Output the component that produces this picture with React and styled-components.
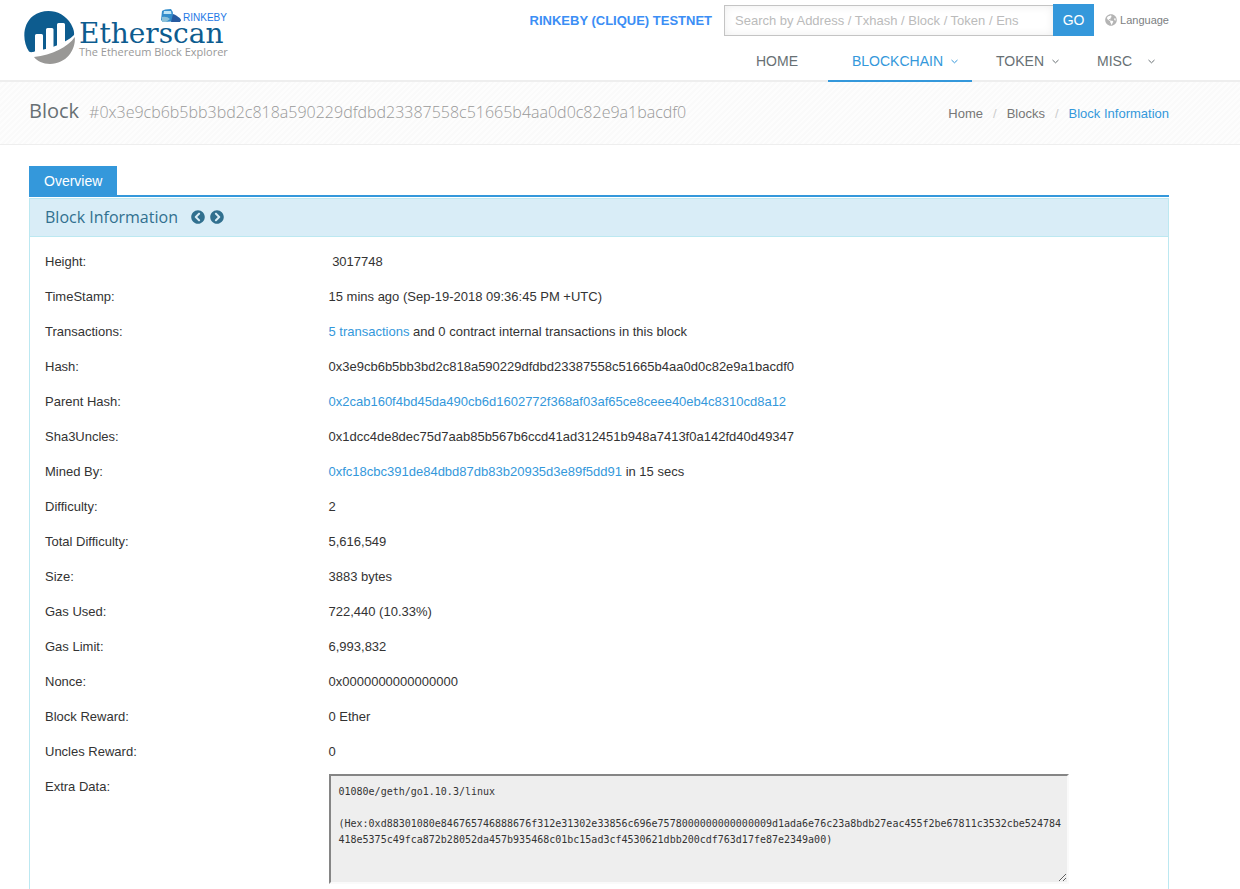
import React from "react";
import styled, { createGlobalStyle } from "styled-components";
import { FaGlobeAmericas, FaChevronCircleLeft, FaChevronCircleRight } from "react-icons/fa";

const Global = createGlobalStyle`
  *, *::before, *::after { box-sizing: border-box; }
  body {
    margin: 0;
    background: #fff;
    color: #333;
    font: 13px/21px "Liberation Sans", Arial, sans-serif;
    overflow-x: hidden;
  }
  a { color: #3498db; text-decoration: none; }
  a:hover { text-decoration: underline; }
`;

const Container = styled.div`
  max-width: 1170px;
  margin: 0 auto;
  padding: 0 15px;
  margin-left: max(14px, calc(50% - 606px));
`;

const Header = styled.header`
  border-bottom: 2px solid #eee;
`;

const HeaderInner = styled(Container)`
  display: flex;
  justify-content: space-between;
  align-items: flex-start;
`;

const LogoLink = styled.a`
  display: block;
  flex: none;
  margin: 6px 0 0 -6px;
`;

const HeaderRight = styled.div`
  display: flex;
  flex-direction: column;
  align-items: flex-end;
`;

const TopBar = styled.div`
  display: flex;
  align-items: center;
  height: 36px;
  padding-top: 4px;
`;

const Network = styled.strong`
  color: #3b8ef5;
  margin-right: 12px;
`;

const SearchForm = styled.form`
  display: flex;
  align-items: flex-end;
`;

const SearchInput = styled.input`
  width: 329px;
  height: 31px;
  padding: 0 10px;
  border: 1px solid #c4c4c4;
  border-right: 0;
  border-radius: 0;
  background: #fff;
  box-shadow: inset 0 0 10px #eee;
  font: 13px "Liberation Sans", Arial, sans-serif;
  outline: none;
  &::placeholder { color: #bbb; opacity: 1; }
`;

const SearchButton = styled.button`
  width: 41px;
  height: 32px;
  padding: 0;
  border: 0;
  background: #3498db;
  color: #fff;
  font: 14px "Liberation Sans", Arial, sans-serif;
  cursor: pointer;
`;

const Language = styled.a`
  display: flex;
  align-items: center;
  gap: 3px;
  margin-left: 11px;
  color: #7c8082;
  font-size: 11px;
  svg { color: #b4b4b4; }
`;

const Nav = styled.nav`
  display: flex;
  height: 44px;
`;

const NavLink = styled.a`
  display: flex;
  align-items: center;
  gap: ${(p) => (p.$wide ? 16 : 8)}px;
  height: 46px;
  padding: 6px ${(p) => (p.$wide ? 14 : 14)}px 0 24px;
  color: ${(p) => (p.$active ? "#3498db" : "#687074")};
  border-bottom: 2px solid ${(p) => (p.$active ? "#3498db" : "transparent")};
  font-size: 14px;
  &:first-child { padding-right: 30px; }
`;

const TitleBar = styled.section`
  background: repeating-linear-gradient(135deg, #fafafa 0 2px, #fdfdfd 2px 4px);
  border-bottom: 1px solid #eee;
`;

const TitleInner = styled(Container)`
  display: flex;
  justify-content: space-between;
  align-items: center;
  height: 62px;
`;

const Title = styled.h1`
  margin: 0;
  padding-bottom: 4px;
  display: flex;
  align-items: baseline;
  gap: 10px;
  color: #687074;
  font: 400 20px/28px "Open Sans", sans-serif;
`;

const TitleHash = styled.span`
  color: #999;
  font-size: 16px;
  font-weight: 300;
`;

const Crumbs = styled.ol`
  display: flex;
  margin: 0;
  padding: 0;
  list-style: none;
`;

const Crumb = styled.li`
  a { color: ${(p) => (p.$active ? "#3498db" : "#777")}; }
  &:not(:first-child)::before { content: "/"; color: #ccc; padding: 0 10px; }
`;

const Content = styled(Container)`
  padding-top: 21px;
`;

const Tabs = styled.div`
  display: flex;
  border-bottom: 2px solid #3498db;
`;

const Tab = styled.button`
  height: 29px;
  padding: 0 15px;
  border: 0;
  background: #3498db;
  color: #fff;
  font: 14px "Liberation Sans", Arial, sans-serif;
`;

const Panel = styled.section`
  margin-top: 1px;
  padding-bottom: 24px;
  border: 1px solid #bce8f1;
`;

const PanelHeading = styled.header`
  display: flex;
  align-items: center;
  gap: 13px;
  height: 38px;
  padding: 0 15px 2px;
  background: #d9edf7;
  border-bottom: 1px solid #bce8f1;
`;

const PanelTitle = styled.h2`
  margin: 0;
  color: #31708f;
  font: 400 16px/22px "Open Sans", sans-serif;
`;

const Pager = styled.span`
  display: flex;
  gap: 5px;
  a { display: flex; color: #31708f; }
`;

const Details = styled.table`
  width: 100%;
  margin-top: 7px;
  border-collapse: collapse;
`;

const Label = styled.th`
  width: 25%;
  padding: 7px 0 7px 15px;
  font-weight: 400;
  text-align: left;
  vertical-align: top;
`;

const Value = styled.td`
  padding: 7px 14px;
  vertical-align: top;
  white-space: pre-wrap;
`;

const ExtraCell = styled(Value)`
  padding-top: 5px;
`;

const ExtraData = styled.textarea`
  display: block;
  width: 740px;
  max-width: 100%;
  height: 110px;
  padding: 8px 4px 8px 8px;
  border: 2px solid;
  border-color: #858585 #fafafa #fafafa #858585;
  border-radius: 0;
  background: #eee;
  color: #333;
  font: 10px/16px "DejaVu Sans Mono", monospace;
  word-break: break-all;
  outline: none;
`;

function Chevron() {
  return (
    <svg width="7" height="5" viewBox="0 0 7 5" fill="none" stroke="currentColor" aria-hidden="true">
      <path d="M.5 1 3.5 3.8 6.5 1" />
    </svg>
  );
}

function Logo() {
  return (
    <svg width="208" height="62" viewBox="23 6 208 62" role="img" aria-label="Etherscan">
      <path d="M29 51.500C22 41 22.500 24 33 16C45 7 63 10 71 24C73 28 74.500 31 74 35C66 43 50 49 36 51C32 52.500 30.500 52.500 29 51.500Z" fill="#0d5c8f" />
      <path d="M34 57C52 55 68 47 74.800 37C76 50 66 64 50 64C43 64 37 61 34 57Z" fill="#999896" />
      <path d="M35 52V35.500Q35 34 36.500 34H41.500Q43 34 43 35.500V51ZM46 50V29.500Q46 28 47.500 28H52Q53.500 28 53.500 29.500V48ZM57 46.500V24.500Q57 23 58.500 23H63.500Q65 23 65 24.500V42Z" fill="#fff" />
      <text x="79" y="43" fill="#0d5c8f" fontFamily="DejaVu Serif, serif" fontSize="28">Etherscan</text>
      <text x="79" y="56" fill="#999" fontFamily="Open Sans, sans-serif" fontSize="11">The Ethereum Block Explorer</text>
      <path d="M162 11Q164 9 171 9Q173 11 173 15L180 18L181 21L163 22L161 20Z" fill="#338dcb" />
      <path d="M164 11H171L171.500 14H163.500Z" fill="#bde4f5" />
      <path d="M162 17Q167 16 170 19L166 22H162Z" fill="#8bc0d9" />
      <path d="M173 14Q177 15 181 20L180 22H171Z" fill="#265aa0" />
      <text x="183" y="21" fill="#1d78e6" fontFamily="Liberation Sans, sans-serif" fontSize="10">RINKEBY</text>
    </svg>
  );
}

const hash = "0x3e9cb6b5bb3bd2c818a590229dfdbd23387558c51665b4aa0d0c82e9a1bacdf0";

const rows = [
  ["Height:", " 3017748"],
  ["TimeStamp:", "15 mins ago (Sep-19-2018 09:36:45 PM +UTC)"],
  ["Transactions:", <><a href="#txs">5 transactions</a> and 0 contract internal transactions in this block</>],
  ["Hash:", hash],
  ["Parent Hash:", <a href="#parent">0x2cab160f4bd45da490cb6d1602772f368af03af65ce8ceee40eb4c8310cd8a12</a>],
  ["Sha3Uncles:", "0x1dcc4de8dec75d7aab85b567b6ccd41ad312451b948a7413f0a142fd40d49347"],
  ["Mined By:", <><a href="#miner">0xfc18cbc391de84dbd87db83b20935d3e89f5dd91</a> in 15 secs</>],
  ["Difficulty:", "2"],
  ["Total Difficulty:", "5,616,549"],
  ["Size:", "3883 bytes"],
  ["Gas Used:", "722,440 (10.33%)"],
  ["Gas Limit:", "6,993,832"],
  ["Nonce:", "0x0000000000000000"],
  ["Block Reward:", "0 Ether"],
  ["Uncles Reward:", "0"],
];

const extra =
  "01080e/geth/go1.10.3/linux\n\n(Hex:0xd88301080e846765746888676f312e31302e33856c696e7578000000000000009d1ada6e76c23a8bdb27eac455f2be67811c3532cbe524784418e5375c49fca872b28052da457b935468c01bc15ad3cf4530621dbb200cdf763d17fe87e2349a00)";

export default function App() {
  return (
    <>
      <Global />
      <Header>
        <HeaderInner>
          <LogoLink href="#home"><Logo /></LogoLink>
          <HeaderRight>
            <TopBar>
              <Network>RINKEBY (CLIQUE) TESTNET</Network>
              <SearchForm onSubmit={(e) => e.preventDefault()}>
                <SearchInput aria-label="Search" placeholder="Search by Address / Txhash / Block / Token / Ens" />
                <SearchButton type="submit">GO</SearchButton>
              </SearchForm>
              <Language href="#language"><FaGlobeAmericas size={12} />Language</Language>
            </TopBar>
            <Nav>
              <NavLink href="#home">HOME</NavLink>
              <NavLink href="#blockchain" $active>BLOCKCHAIN<Chevron /></NavLink>
              <NavLink href="#token">TOKEN<Chevron /></NavLink>
              <NavLink href="#misc" $wide>MISC<Chevron /></NavLink>
            </Nav>
          </HeaderRight>
        </HeaderInner>
      </Header>
      <TitleBar>
        <TitleInner>
          <Title>Block <TitleHash>#{hash}</TitleHash></Title>
          <nav aria-label="Breadcrumb">
            <Crumbs>
              <Crumb><a href="#home">Home</a></Crumb>
              <Crumb><a href="#blocks">Blocks</a></Crumb>
              <Crumb $active><a href="#block">Block Information</a></Crumb>
            </Crumbs>
          </nav>
        </TitleInner>
      </TitleBar>
      <Content as="main">
        <Tabs role="tablist"><Tab type="button" role="tab" aria-selected="true">Overview</Tab></Tabs>
        <Panel>
          <PanelHeading>
            <PanelTitle>Block Information</PanelTitle>
            <Pager>
              <a href="#previous" aria-label="Previous block"><FaChevronCircleLeft size={14} /></a>
              <a href="#next" aria-label="Next block"><FaChevronCircleRight size={14} /></a>
            </Pager>
          </PanelHeading>
          <Details>
            <tbody>
              {rows.map(([label, value]) => (
                <tr key={label}><Label scope="row">{label}</Label><Value>{value}</Value></tr>
              ))}
              <tr>
                <Label scope="row"><label htmlFor="extra">Extra Data:</label></Label>
                <ExtraCell><ExtraData id="extra" readOnly value={extra} /></ExtraCell>
              </tr>
            </tbody>
          </Details>
        </Panel>
      </Content>
    </>
  );
}
